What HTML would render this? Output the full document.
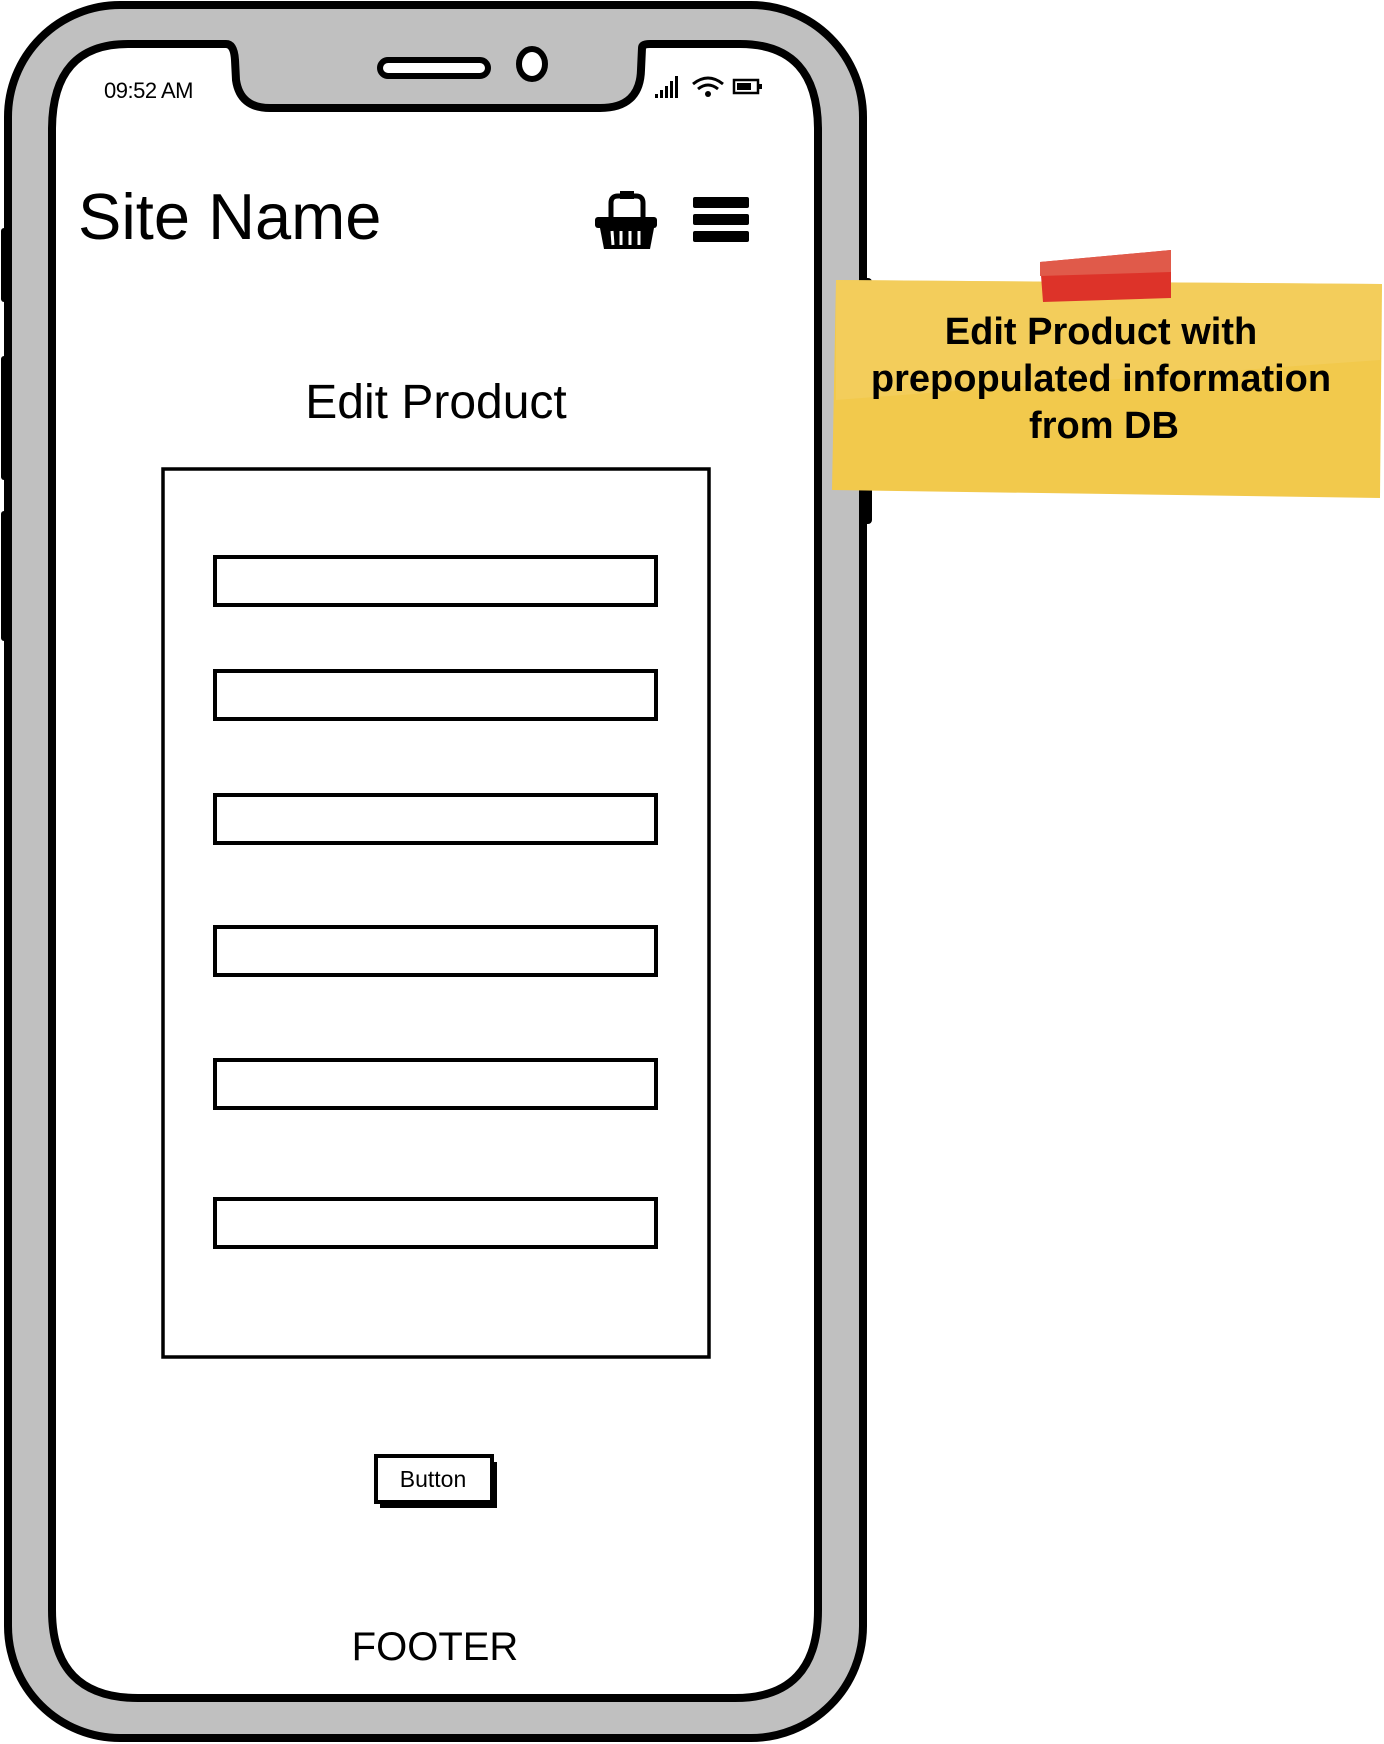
<!DOCTYPE html>
<html><head><meta charset="utf-8"><style>
html,body{margin:0;padding:0;background:#fff;width:1384px;height:1744px;overflow:hidden}
svg{display:block}
text{font-family:"Liberation Sans",sans-serif;fill:#000}
</style></head><body>
<svg width="1384" height="1744" viewBox="0 0 1384 1744" xmlns="http://www.w3.org/2000/svg">
<rect x="1" y="228" width="12" height="74" rx="3" fill="#000"/>
<rect x="1" y="356" width="12" height="124" rx="3" fill="#000"/>
<rect x="1" y="511" width="12" height="130" rx="3" fill="#000"/>
<rect x="852" y="278" width="20" height="246" rx="4" fill="#000"/>
<rect x="8" y="5" width="855" height="1733" rx="112" fill="#c0c0c0" stroke="#000" stroke-width="8"/>
<path d="M128 44 L226 44 Q234 44 235 60 L236 80 Q240 108 270 108 L600 108 Q640 108 641 70 L642 48 Q642 44 650 44 L740 44 Q818 44 818 130 L818 1610 Q818 1698 735 1698 L138 1698 Q52 1698 52 1610 L52 130 Q52 44 128 44 Z" fill="#fff" stroke="#000" stroke-width="8"/>
<rect x="380" y="60" width="108" height="16" rx="8" fill="#fff" stroke="#000" stroke-width="6"/>
<ellipse cx="532" cy="64" rx="13" ry="15" fill="#fff" stroke="#000" stroke-width="6"/>
<text x="104" y="98" font-size="22" letter-spacing="-0.5">09:52 AM</text>
<g fill="#000">
<rect x="655" y="94" width="3" height="4"/><rect x="660" y="90" width="3" height="8"/><rect x="665" y="86" width="3" height="12"/><rect x="670" y="81" width="3" height="17"/><rect x="675" y="76" width="3" height="22"/>
</g>
<path d="M693 84 Q708 72 723 84" fill="none" stroke="#000" stroke-width="3"/>
<path d="M698 89 Q708 81 718 89" fill="none" stroke="#000" stroke-width="3"/>
<circle cx="708" cy="94" r="3" fill="#000"/>
<rect x="734" y="80" width="24" height="13" fill="none" stroke="#000" stroke-width="2.5"/>
<rect x="737" y="83" width="14" height="7" fill="#000"/>
<rect x="759" y="84" width="3" height="5" fill="#000"/>
<text x="78" y="239" font-size="65">Site Name</text>
<path d="M611 222 L611 203 Q611 196 618 196 L636 196 Q643 196 643 203 L643 222" fill="none" stroke="#000" stroke-width="5"/>
<rect x="620" y="191" width="14" height="8" fill="#000"/>
<rect x="595" y="217" width="62" height="11" rx="3" fill="#000"/>
<path d="M600 228 L654 228 L650 249 L604 249 Z" fill="#000"/>
<g stroke="#fff" stroke-width="3"><line x1="612" y1="231" x2="613" y2="245"/><line x1="621" y1="231" x2="621" y2="245"/><line x1="630" y1="231" x2="630" y2="245"/><line x1="639" y1="231" x2="639" y2="245"/></g>
<rect x="693" y="197" width="56" height="11" rx="2" fill="#000"/>
<rect x="693" y="214" width="56" height="11" rx="2" fill="#000"/>
<rect x="693" y="231" width="56" height="11" rx="2" fill="#000"/>
<text x="436" y="418" font-size="48" text-anchor="middle">Edit Product</text>
<rect x="163" y="469" width="546" height="888" fill="none" stroke="#000" stroke-width="3.5"/>
<g fill="none" stroke="#000" stroke-width="4">
<rect x="215" y="557" width="441" height="48"/>
<rect x="215" y="671" width="441" height="48"/>
<rect x="215" y="795" width="441" height="48"/>
<rect x="215" y="927" width="441" height="48"/>
<rect x="215" y="1060" width="441" height="48"/>
<rect x="215" y="1199" width="441" height="48"/>
</g>
<rect x="380" y="1462" width="117" height="46" fill="#000"/>
<rect x="376" y="1456" width="116" height="46" fill="#fff" stroke="#000" stroke-width="4"/>
<text x="433" y="1487" font-size="23" text-anchor="middle">Button</text>
<text x="435" y="1660" font-size="40" text-anchor="middle">FOOTER</text>
<path d="M836 280 L1382 284 L1380 498 L832 490 Z" fill="#f2c94c"/>
<path d="M836 280 L1382 284 L1380 360 Q1100 380 836 400 Z" fill="#f4d166" opacity="0.6"/>
<path d="M1040 262 L1171 250 L1171 298 L1043 302 Z" fill="#dd3329"/>
<path d="M1040 262 L1171 250 L1171 272 L1040 276 Z" fill="#e05a4a"/>
<g font-weight="bold" font-size="38" text-anchor="middle" letter-spacing="0">
<text x="1101" y="344">Edit Product with</text>
<text x="1101" y="391">prepopulated information</text>
<text x="1104" y="438">from DB</text>
</g>
</svg>
</body></html>
